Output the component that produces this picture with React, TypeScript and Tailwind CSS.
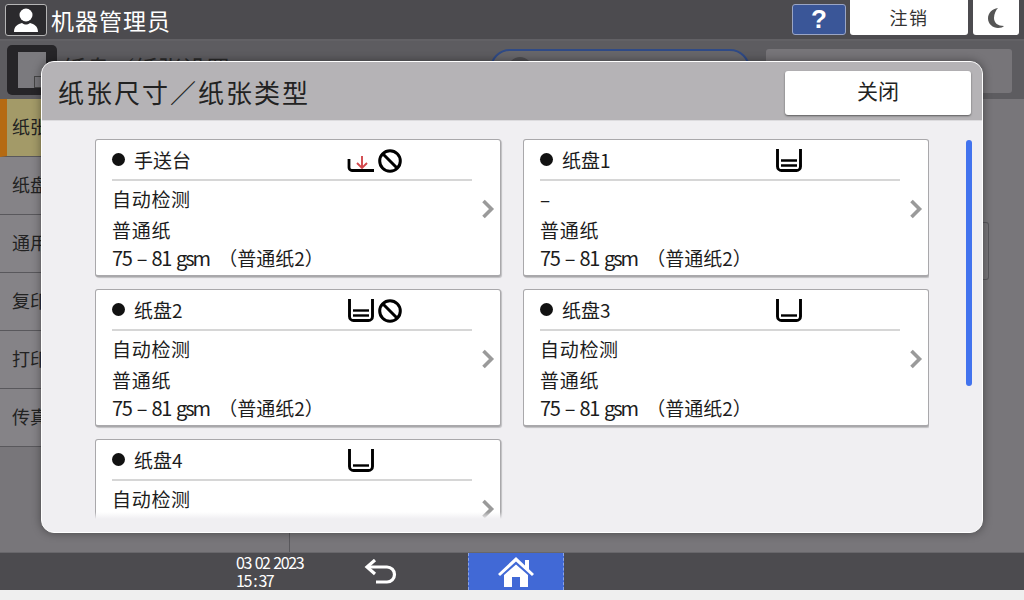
const CJK = "font-['Noto_Sans_CJK_SC','Noto_Sans',sans-serif]";

const TABS = ["纸张", "纸盘", "通用", "复印", "打印", "传真"];

type Tray = {
  name: string;
  icon: "manual" | "two" | "one";
  blocked?: boolean;
  size: string;
};

const TRAYS: Tray[] = [
  { name: "手送台", icon: "manual", blocked: true, size: "自动检测" },
  { name: "纸盘1", icon: "two", size: "–" },
  { name: "纸盘2", icon: "two", blocked: true, size: "自动检测" },
  { name: "纸盘3", icon: "one", size: "自动检测" },
  { name: "纸盘4", icon: "one", size: "自动检测" },
];

function TrayIcon({ kind }: { kind: Tray["icon"] }) {
  if (kind === "manual") {
    return (
      <svg width="28" height="24" viewBox="0 0 28 24" fill="none">
        <path d="M2 10v8.500a3 3 0 0 0 3 3h22" stroke="#000" strokeWidth="2.800" />
        <path d="M15 7v12M10 14l5 5 5-5" stroke="#d2484c" strokeWidth="1.900" />
      </svg>
    );
  }
  return (
    <svg width="28" height="24" viewBox="0 0 28 24" fill="none">
      <path d="M2.500 0v17.500a4 4 0 0 0 4 4h15a4 4 0 0 0 4-4V0" stroke="#000" strokeWidth="2.900" />
      {kind === "two" && <path d="M6 11.500h16" stroke="#000" strokeWidth="2.400" />}
      <path d="M6 16.500h16" stroke="#000" strokeWidth="2.400" />
    </svg>
  );
}

function Blocked() {
  return (
    <svg width="24" height="24" viewBox="0 0 24 24" fill="none">
      <circle cx="12" cy="12" r="10.300" stroke="#000" strokeWidth="3" />
      <path d="M5 5l14 14" stroke="#000" strokeWidth="3" />
    </svg>
  );
}

function TrayCard({ tray }: { tray: Tray }) {
  return (
    <div className="relative h-[138px] w-[406px] shrink-0 rounded-[3px] border border-b-2 border-[#a9a8ab] bg-white pl-4 pr-7 shadow-[1px_1px_1px_rgba(0,0,0,0.2)]">
      <div className="flex h-[41px] items-center border-b-2 border-[#d6d6d6] text-[#1c1c1c]">
        <span className="h-[13px] w-[13px] rounded-full bg-[#111]" />
        <span className="ml-[9px] w-[213px] pt-px text-[19px]">{tray.name}</span>
        <span className="mt-[2px] flex w-[60px] items-center gap-[3px]">
          <TrayIcon kind={tray.icon} />
          {tray.blocked && <Blocked />}
        </span>
      </div>
      <div className="pt-[3px] text-[19px] tracking-[0.7px] text-[#1c1c1c]">
        <p className="h-[30px] leading-[30px]">{tray.size}</p>
        <p className="h-[32px] leading-[32px]">普通纸</p>
        <p className="flex h-[24px] items-center whitespace-pre leading-[24px]">
          <span className="text-[20px] tracking-[-1.3px] [word-spacing:2px]">75 – 81</span>
          <span className="ml-[5px] text-[20px] tracking-[-2px]">gsm</span>
          <span className="ml-[9px] tracking-[0px]">（普通纸2）</span>
        </p>
      </div>
      <svg className="absolute right-[5px] top-[59px]" width="14" height="20" viewBox="0 0 14 20" fill="none">
        <path d="M2.500 2l8 8-8 8" stroke="#9a9a9a" strokeWidth="3.600" />
      </svg>
    </div>
  );
}

export default function App() {
  return (
    <div className={`relative h-[600px] w-[1024px] overflow-hidden bg-[#efefef] ${CJK}`}>
      <div className="flex h-[590px] flex-col">
        <header className="flex h-[41px] shrink-0 items-start justify-between border-b-2 border-[#626165] bg-[#4c4b4f] pl-[5px] pr-[5px] pt-1">
          <div className="flex items-center gap-1">
            <span className="flex h-[32px] w-[42px] items-center justify-center rounded-[3px] border border-[#b5b5b5] bg-[#2b2a2d]">
              <svg width="28" height="26" viewBox="0 0 28 26" fill="#fff">
                <circle cx="14" cy="8" r="6.500" />
                <path d="M2 25c0-6 4-8 8-9 3 2 5 2 8 0 4 1 8 3 8 9z" />
              </svg>
            </span>
            <span className="text-[23px] leading-8 tracking-[1px] text-white">机器管理员</span>
          </div>
          <div className="-mt-1 flex h-[35px] items-end gap-[4px]">
            <span className="flex h-[31px] w-[54px] items-center justify-center rounded-[3px] border border-[#9aa5c5] bg-[#3a5698] font-['Liberation_Sans',sans-serif] text-[26px] font-bold text-white">
              ?
            </span>
            <span className="flex h-[35px] w-[118px] items-center justify-center rounded-b-[3px] bg-white text-[18px] tracking-[1.5px] text-[#333]">
              注销
            </span>
            <span className="ml-[1px] flex h-[35px] w-[46px] items-center justify-center rounded-b-[3px] bg-white">
              <svg width="18" height="22" viewBox="0 0 18 22" fill="#555">
                <path d="M11 1C5 2 1 6 1 11.500C1 17 6 21 11 21c3 0 5-1 6-2-6 0-10-3-10-8 0-4 2-8 4-10z" />
              </svg>
            </span>
          </div>
        </header>

        <main className="flex min-h-0 flex-1 flex-col bg-[#78767a]">
          <div className="flex h-[58px] shrink-0 items-start bg-[#5d5c60] pl-[7px] pt-[4px]">
            <span className="flex h-[50px] w-[50px] shrink-0 items-center justify-center rounded-[5px] bg-[#262528]">
              <span className="relative h-[36px] w-[28px] bg-[#7b7a7e]">
                <span className="absolute bottom-0 right-0 h-3 w-3 border border-[#444] bg-[#77767a]" />
              </span>
            </span>
            <span className="ml-[5px] mt-[7px] w-[300px] shrink-0 text-[24px] leading-8 text-[#2a2a2a]">
              纸盘／纸张设置
            </span>
            <span className="ml-[128px] mt-[4px] flex h-[40px] w-[260px] shrink-0 items-start rounded-t-[20px] border-2 border-[#2f4a86] bg-[#68676b] pl-4 pt-[6px]">
              <span className="h-6 w-6 rounded-full bg-[#4d4c50]" />
            </span>
            <span className="ml-[16px] mt-[4px] h-[44px] w-[246px] shrink-0 rounded-[3px] bg-[#777579]" />
          </div>
          <div className="flex min-h-0 flex-1">
            <nav className="w-[290px] border-r border-[#59585c] bg-[#78767a]">
              {TABS.map((tab, i) => (
                <div
                  key={tab}
                  className={`flex h-[58px] items-center border-b border-[#59585c] pb-[2px] pl-3 text-[18px] text-[#222] ${
                    i === 0 ? "border-l-[7px] border-l-[#b56a12] bg-[#a39a68] pl-[5px]" : "bg-[#858387]"
                  }`}
                >
                  {tab}
                </div>
              ))}
            </nav>
            <div className="flex flex-1 items-start justify-end pr-[35px] pt-[123px]">
              <span className="h-[58px] w-[6px] rounded-r-[3px] border border-l-0 border-[#59585c]" />
            </div>
          </div>
        </main>

        <footer className="flex h-[38px] shrink-0 items-stretch border-t border-[#68676b] bg-[#4c4b4f] text-white">
          <div className="ml-[236px] w-[128px] text-[16px] leading-[18px] tracking-[-1.4px]">
            <p className="[word-spacing:1.5px]">03 02 2023</p>
            <p>15 : 37</p>
          </div>
          <svg className="mt-[6px]" width="34" height="26" viewBox="0 0 34 26" fill="none">
            <path d="M3 8h20a7 7 0 0 1 0 15H12" stroke="#fff" strokeWidth="3.200" />
            <path d="M11 1L3 8l8 7" stroke="#fff" strokeWidth="3.200" />
          </svg>
          <div className="ml-[70px] flex w-[96px] items-center justify-center border-x border-dashed border-[#8aa4e8] bg-[#4169d6]">
            <svg width="38" height="32" viewBox="0 0 38 32" fill="#fff">
              <path d="M19 1L1 18l2 2L19 5.500 35 20l2-2-5-4.700V4h-4v5.500z" />
              <path d="M7 19L19 8.500 31 19v12h-8V21h-8v10H7z" />
            </svg>
          </div>
        </footer>
      </div>

      <section className="absolute left-[41px] top-[61px] flex h-[472px] w-[942px] flex-col overflow-hidden rounded-[13px] border border-white bg-[#f0eff2] shadow-[0_0_10px_rgba(0,0,0,0.4)]">
        <div className="flex h-[59px] shrink-0 items-center justify-between border-b border-[#dcdbde] bg-[#b5b3b6] pl-4 pr-[11px]">
          <h1 className="text-[26px] tracking-[2px] text-[#222]">纸张尺寸／纸张类型</h1>
          <button className="mt-[3px] h-[44px] w-[186px] rounded-[3px] bg-white pb-1 text-[21px] text-[#222] shadow-[0_1px_2px_rgba(0,0,0,0.5)]">
            关闭
          </button>
        </div>
        <div className="relative flex min-h-0 flex-1 pl-[53px] pt-[18px]">
          <div className="relative h-[380px] overflow-hidden">
            <div className="grid w-[834px] grid-cols-[406px_406px] gap-x-[22px] gap-y-3">
              {TRAYS.map((tray) => (
                <TrayCard key={tray.name} tray={tray} />
              ))}
            </div>
            <div className="absolute inset-x-0 bottom-0 h-[7px] bg-gradient-to-b from-transparent to-[#f0eff2]" />
          </div>
          <div className="ml-[37px] mt-[1px] h-[246px] w-[6px] rounded-full bg-[#4273ee]" />
        </div>
      </section>
    </div>
  );
}
